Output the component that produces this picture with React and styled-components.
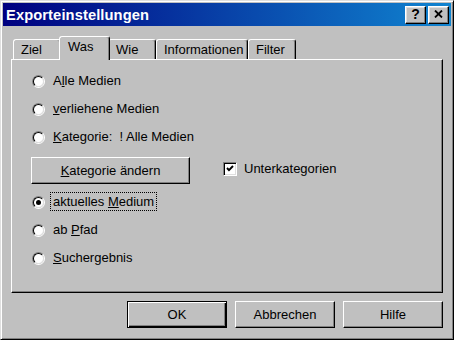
import React from 'react';
import styled, { createGlobalStyle } from 'styled-components';

const GlobalStyle = createGlobalStyle`
  html, body {
    margin: 0;
    padding: 0;
    background: #c0c0c0;
  }
  * {
    box-sizing: border-box;
  }
`;

function App() {
  return (
    <>
      <GlobalStyle />
      <Window>
        <TitleBar>
          <TitleText>Exporteinstellungen</TitleText>
          <TitleButtons>
            <TitleButton>?</TitleButton>
            <TitleButton>
              <svg width="9" height="8" viewBox="0 0 9 8">
                <path d="M1 0.5 L8 7.5 M8 0.5 L1 7.5" stroke="#000" strokeWidth="1.8" />
              </svg>
            </TitleButton>
          </TitleButtons>
        </TitleBar>

        <Body>
          <TabRow>
            <Tab $w={48}>Ziel</Tab>
            <Tab $w={51} $active>Was</Tab>
            <Tab $w={48}>Wie</Tab>
            <Tab $w={92}>Informationen</Tab>
            <Tab $w={48}>Filter</Tab>
          </TabRow>

          <Panel>
            <RadioRow>
              <Radio />
              <Label>A<U>l</U>le Medien</Label>
            </RadioRow>
            <RadioRow>
              <Radio />
              <Label><U>v</U>erliehene Medien</Label>
            </RadioRow>
            <RadioRow>
              <Radio />
              <Label><U>K</U>ategorie:&nbsp; ! Alle Medien</Label>
            </RadioRow>

            <CategoryRow>
              <Button $w={159}><U>K</U>ategorie ändern</Button>
              <CheckRow>
                <CheckBox>
                  <svg width="8" height="7" viewBox="0 0 8 7">
                    <path d="M1 3 L3 5.2 L7 1" stroke="#000" strokeWidth="1.9" fill="none" />
                  </svg>
                </CheckBox>
                <span>Unterkategorien</span>
              </CheckRow>
            </CategoryRow>

            <RadioRow $first>
              <Radio $checked />
              <Label $focused>aktuelles <U>M</U>edium</Label>
            </RadioRow>
            <RadioRow>
              <Radio />
              <Label>ab <U>P</U>fad</Label>
            </RadioRow>
            <RadioRow>
              <Radio />
              <Label><U>S</U>uchergebnis</Label>
            </RadioRow>
          </Panel>

          <ButtonRow>
            <Button $w={100} $default>OK</Button>
            <Button $w={100}>Abbrechen</Button>
            <Button $w={100}>Hilfe</Button>
          </ButtonRow>
        </Body>
      </Window>
    </>
  );
}

function Radio({ $checked }) {
  return (
    <RadioOuter>
      <RadioInner>{$checked && <RadioDot />}</RadioInner>
    </RadioOuter>
  );
}

export default App;

const Window = styled.div`
  width: 454px;
  height: 340px;
  display: flex;
  flex-direction: column;
  padding: 2px;
  background: #c0c0c0;
  border: 1px solid;
  border-color: #dfdfdf #000 #000 #dfdfdf;
  box-shadow: inset 1px 1px #fff, inset -1px -1px #808080;
  font-family: "Liberation Sans", Arial, sans-serif;
  font-size: 13px;
  color: #000;
`;

const TitleBar = styled.div`
  height: 23px;
  flex-shrink: 0;
  display: flex;
  align-items: center;
  justify-content: space-between;
  padding: 0 2px 0 3px;
  background: linear-gradient(to right, #000080, #1084d0);
`;

const TitleText = styled.span`
  color: #fff;
  font-weight: 700;
  font-size: 14.7px;
  letter-spacing: 0.1px;
`;

const TitleButtons = styled.div`
  display: flex;
  gap: 2px;
`;

const TitleButton = styled.div`
  width: 21px;
  height: 18px;
  display: flex;
  align-items: center;
  justify-content: center;
  background: #c0c0c0;
  border: 1px solid;
  border-color: #fff #000 #000 #fff;
  box-shadow: inset -1px -1px #808080, inset 1px 1px #dfdfdf;
  font-weight: 700;
  font-size: 14px;
  line-height: 1;
  padding-bottom: 1px;
`;

const Body = styled.div`
  flex: 1;
  display: flex;
  flex-direction: column;
  padding: 10px 8px 9px 8px;
`;

const TabRow = styled.div`
  height: 23px;
  display: flex;
  align-items: flex-end;
  padding-left: 2px;
`;

const Tab = styled.div`
  position: relative;
  width: ${(p) => (p.$w)}px;
  height: ${(p) => (p.$active ? 24 : 20)}px;
  margin: ${(p) => (p.$active ? '0 -2px -1px -2px' : '0')};
  z-index: ${(p) => (p.$active ? 1 : 0)};
  padding-left: ${(p) => (p.$active ? 8 : 7)}px;
  padding-top: ${(p) => (p.$active ? 2 : 2)}px;
  display: flex;
  align-items: flex-start;
  line-height: 15px;
  background: #c0c0c0;
  border: 1px solid;
  border-bottom: none;
  border-color: #fff #000 transparent #fff;
  border-radius: 3px 3px 0 0;
  box-shadow: inset -1px 0 #808080;
`;

const Panel = styled.div`
  height: 234px;
  flex-shrink: 0;
  display: flex;
  flex-direction: column;
  padding: 6px 0 0 19px;
  border: 1px solid;
  border-color: #fff #000 #000 #fff;
  box-shadow: inset -1px -1px #808080;
`;

const RadioRow = styled.div`
  height: 28px;
  display: flex;
  align-items: center;
  gap: 5px;
  padding-left: 1px;
  margin-top: ${(p) => (p.$first ? 3 : 0)}px;
`;

const RadioOuter = styled.span`
  width: 13px;
  height: 13px;
  flex-shrink: 0;
  margin-top: 3px;
  border-radius: 50%;
  border: 1px solid;
  border-color: #808080 #fff #fff #808080;
  display: flex;
  align-items: center;
  justify-content: center;
`;

const RadioInner = styled.span`
  width: 11px;
  height: 11px;
  border-radius: 50%;
  border: 1px solid;
  border-color: #000 #dfdfdf #dfdfdf #000;
  background: #fff;
  display: flex;
  align-items: center;
  justify-content: center;
`;

const RadioDot = styled.span`
  width: 5px;
  height: 5px;
  border-radius: 50%;
  background: #000;
`;

const Label = styled.span`
  line-height: 17px;
  padding: 0 2px;
  border: 1px ${(p) => (p.$focused ? 'dotted #000' : 'solid transparent')};
`;

const U = styled.span`
  text-decoration: underline;
`;

const CategoryRow = styled.div`
  display: flex;
  align-items: flex-start;
  gap: 33px;
  margin-top: 7px;
`;

const Button = styled.div`
  width: ${(p) => p.$w}px;
  height: 27px;
  display: flex;
  align-items: center;
  justify-content: center;
  background: #c0c0c0;
  border: 1px solid;
  border-color: ${(p) => (p.$default ? '#000' : '#fff #000 #000 #fff')};
  box-shadow: ${(p) =>
    p.$default
      ? 'inset 1px 1px #fff, inset -1px -1px #000, inset -2px -2px #808080'
      : 'inset -1px -1px #808080'};
`;

const CheckRow = styled.div`
  display: flex;
  align-items: center;
  gap: 7px;
  margin-top: 4px;
`;

const CheckBox = styled.span`
  width: 14px;
  height: 14px;
  display: flex;
  align-items: center;
  justify-content: center;
  background: #fff;
  border: 1px solid;
  border-color: #808080 #fff #fff #808080;
  box-shadow: inset 1px 1px #000, inset -1px -1px #dfdfdf;
`;

const ButtonRow = styled.div`
  display: flex;
  justify-content: flex-end;
  gap: 8px;
  margin-top: 8px;
`;
